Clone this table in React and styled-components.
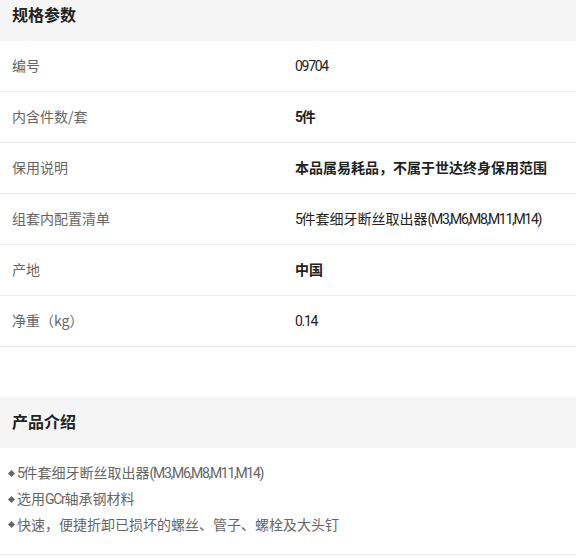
import React from "react";
import styled, { createGlobalStyle } from "styled-components";

const Global = createGlobalStyle`
  html, body { margin: 0; padding: 0; background: #fff; }
  body {
    font-family: "Noto Sans CJK SC", sans-serif;
    color: #333;
    overflow: hidden;
  }
`;

const Page = styled.div`
  width: 576px;
  margin-top: -10px;
  display: flex;
  flex-direction: column;
`;

const SectionHead = styled.div`
  height: 51px;
  background: #f5f5f5;
  display: flex;
  align-items: center;
  padding: 0 12px 4px;
  box-sizing: border-box;
`;

const Title = styled.h2`
  margin: 0;
  font-size: 16px;
  font-weight: 700;
  color: #222;
`;

const SpecTable = styled.div`
  display: flex;
  flex-direction: column;
`;

const SpecRow = styled.div`
  display: grid;
  grid-template-columns: 283px 1fr;
  height: 51px;
  align-items: center;
  border-bottom: 1px solid #ebebeb;
  box-sizing: border-box;
  padding: 0 0 3px 12px;
`;

const Label = styled.div`
  font-size: 14px;
  color: #666;
`;

const Value = styled.div`
  font-size: 14px;
  color: #222;
  font-weight: ${(p) => (p.$bold ? 700 : 400)};
`;

const Latin = styled.span`
  font-family: Roboto, sans-serif;
  font-size: 14px;
  letter-spacing: -1.3px;
`;

const Spacer = styled.div`
  height: 50px;
`;

const IntroList = styled.ul`
  list-style: none;
  margin: 0;
  padding: 12px 8px 17px;
  border-bottom: 1px solid #ebebeb;
`;

const IntroItem = styled.li`
  font-size: 14px;
  line-height: 25px;
  color: #666;
  display: flex;
  align-items: center;
  &::before {
    content: "";
    width: 5px;
    height: 5px;
    background: #666;
    transform: rotate(45deg);
    margin: 0 3px 0 1px;
    flex: none;
  }
`;

// split text into CJK runs and Latin runs so Latin gets the narrow face
function Mixed({ text }) {
  const parts = text.split(/([A-Za-z0-9.,()]+)/).filter(Boolean);
  return parts.map((p, i) =>
    /^[A-Za-z0-9.,()]+$/.test(p) ? <Latin key={i}>{p}</Latin> : <React.Fragment key={i}>{p}</React.Fragment>
  );
}

const specs = [
  { label: "编号", value: "09704" },
  { label: "内含件数/套", value: "5件", bold: true },
  { label: "保用说明", value: "本品属易耗品，不属于世达终身保用范围", bold: true },
  { label: "组套内配置清单", value: "5件套细牙断丝取出器(M3,M6,M8,M11,M14)" },
  { label: "产地", value: "中国", bold: true },
  { label: "净重（kg）", value: "0.14" },
];

const intro = [
  "5件套细牙断丝取出器(M3,M6,M8,M11,M14)",
  "选用GCr轴承钢材料",
  "快速，便捷折卸已损坏的螺丝、管子、螺栓及大头钉",
];

export default function App() {
  return (
    <>
      <Global />
      <Page>
        <SectionHead>
          <Title>规格参数</Title>
        </SectionHead>
        <SpecTable>
          {specs.map((s) => (
            <SpecRow key={s.label}>
              <Label>{s.label}</Label>
              <Value $bold={s.bold}>
                <Mixed text={s.value} />
              </Value>
            </SpecRow>
          ))}
        </SpecTable>
        <Spacer />
        <SectionHead>
          <Title>产品介绍</Title>
        </SectionHead>
        <IntroList>
          {intro.map((t) => (
            <IntroItem key={t}>
              <span>
                <Mixed text={t} />
              </span>
            </IntroItem>
          ))}
        </IntroList>
      </Page>
    </>
  );
}
